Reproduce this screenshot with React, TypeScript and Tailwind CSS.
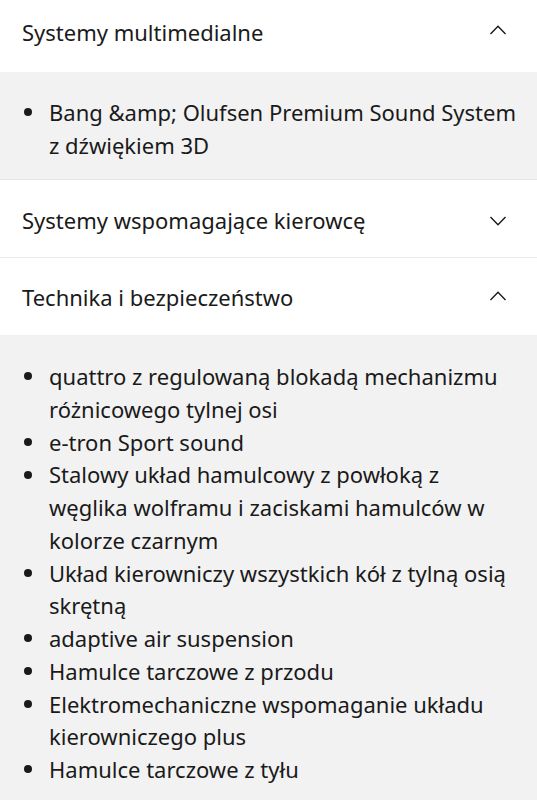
import React from "react";

const Chevron = ({ up }: { up: boolean }) => (
  <svg width="18" height="10" viewBox="0 0 18 10" fill="none" className="shrink-0">
    {up ? (
      <path d="M1.5 9 L9 1.2 L16.5 9" stroke="#1a1a1a" strokeWidth="1.4" />
    ) : (
      <path d="M1.5 1 L9 8.8 L16.5 1" stroke="#1a1a1a" strokeWidth="1.4" />
    )}
  </svg>
);

const Item = ({ text }: { text: string }) => (
  <li className="flex items-start">
    <span className="w-[49px] shrink-0 flex items-center h-[32.75px] pl-[24px]">
      <span className="w-[8px] h-[8px] rounded-full bg-[#1a1a1a]" />
    </span>
    <span>{text}</span>
  </li>
);

export default function App() {
  const tech = [
    "quattro z regulowaną blokadą mechanizmu różnicowego tylnej osi",
    "e-tron Sport sound",
    "Stalowy układ hamulcowy z powłoką z węglika wolframu i zaciskami hamulców w kolorze czarnym",
    "Układ kierowniczy wszystkich kół z tylną osią skrętną",
    "adaptive air suspension",
    "Hamulce tarczowe z przodu",
    "Elektromechaniczne wspomaganie układu kierowniczego plus",
    "Hamulce tarczowe z tyłu",
  ];
  return (
    <div
      className="w-[537px] h-[800px] overflow-hidden bg-white text-[#1a1a1a] text-[22px] leading-[32.75px]"
      style={{ fontFamily: '"Noto Sans", sans-serif' }}
    >
      <div className="h-[72px] flex items-center justify-between pl-[22px] pr-[30px] pb-[8px]">
        <span>Systemy multimedialne</span>
        <span className="mb-[4px] flex">
          <Chevron up />
        </span>
      </div>
      <div className="bg-[#f2f2f2] h-[108px] pt-[24px] pr-[20px] border-b border-[#e6e6e6]">
        <ul>
          <Item text={"Bang &amp; Olufsen Premium Sound System z dźwiękiem 3D"} />
        </ul>
      </div>
      <div className="h-[78px] flex items-center justify-between pl-[22px] pr-[30px] pt-[4px] border-b border-[#ebebeb]">
        <span>Systemy wspomagające kierowcę</span>
        <span className="flex">
          <Chevron up={false} />
        </span>
      </div>
      <div className="h-[77px] flex items-center justify-between pl-[22px] pr-[30px] pt-[2px]">
        <span>Technika i bezpieczeństwo</span>
        <span className="mb-[3px] flex">
          <Chevron up />
        </span>
      </div>
      <div className="bg-[#f2f2f2] pt-[25px] pr-[20px] pb-[24px] min-h-[465px]">
        <ul>
          {tech.map((t) => (
            <Item key={t} text={t} />
          ))}
        </ul>
      </div>
    </div>
  );
}
